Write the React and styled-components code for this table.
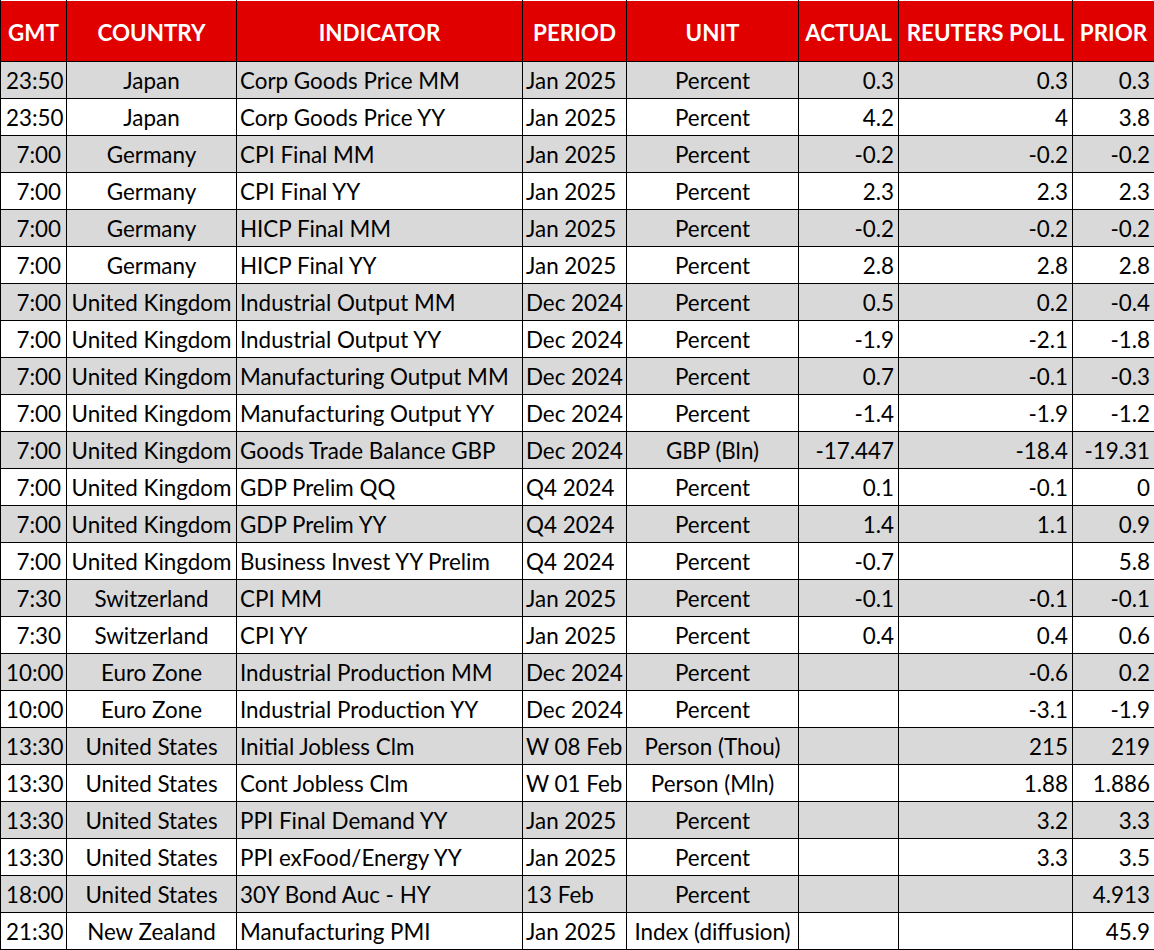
import React from 'react';
import styled, { createGlobalStyle } from 'styled-components';

const GlobalStyle = createGlobalStyle`
  html, body {
    margin: 0;
    padding: 0;
    background: #ffffff;
  }
`;

const columns = [
  { key: 'gmt', label: 'GMT', width: 66, align: 'right' },
  { key: 'country', label: 'COUNTRY', width: 170, align: 'center' },
  { key: 'indicator', label: 'INDICATOR', width: 286, align: 'left' },
  { key: 'period', label: 'PERIOD', width: 104, align: 'left' },
  { key: 'unit', label: 'UNIT', width: 172, align: 'center' },
  { key: 'actual', label: 'ACTUAL', width: 100, align: 'right' },
  { key: 'poll', label: 'REUTERS POLL', width: 174, align: 'right' },
  { key: 'prior', label: 'PRIOR', width: 82, align: 'right' },
];

const rows = [
  ['23:50', 'Japan', 'Corp Goods Price MM', 'Jan 2025', 'Percent', '0.3', '0.3', '0.3'],
  ['23:50', 'Japan', 'Corp Goods Price YY', 'Jan 2025', 'Percent', '4.2', '4', '3.8'],
  ['7:00', 'Germany', 'CPI Final MM', 'Jan 2025', 'Percent', '-0.2', '-0.2', '-0.2'],
  ['7:00', 'Germany', 'CPI Final YY', 'Jan 2025', 'Percent', '2.3', '2.3', '2.3'],
  ['7:00', 'Germany', 'HICP Final MM', 'Jan 2025', 'Percent', '-0.2', '-0.2', '-0.2'],
  ['7:00', 'Germany', 'HICP Final YY', 'Jan 2025', 'Percent', '2.8', '2.8', '2.8'],
  ['7:00', 'United Kingdom', 'Industrial Output MM', 'Dec 2024', 'Percent', '0.5', '0.2', '-0.4'],
  ['7:00', 'United Kingdom', 'Industrial Output YY', 'Dec 2024', 'Percent', '-1.9', '-2.1', '-1.8'],
  ['7:00', 'United Kingdom', 'Manufacturing Output MM', 'Dec 2024', 'Percent', '0.7', '-0.1', '-0.3'],
  ['7:00', 'United Kingdom', 'Manufacturing Output YY', 'Dec 2024', 'Percent', '-1.4', '-1.9', '-1.2'],
  ['7:00', 'United Kingdom', 'Goods Trade Balance GBP', 'Dec 2024', 'GBP (Bln)', '-17.447', '-18.4', '-19.31'],
  ['7:00', 'United Kingdom', 'GDP Prelim QQ', 'Q4 2024', 'Percent', '0.1', '-0.1', '0'],
  ['7:00', 'United Kingdom', 'GDP Prelim YY', 'Q4 2024', 'Percent', '1.4', '1.1', '0.9'],
  ['7:00', 'United Kingdom', 'Business Invest YY Prelim', 'Q4 2024', 'Percent', '-0.7', '', '5.8'],
  ['7:30', 'Switzerland', 'CPI MM', 'Jan 2025', 'Percent', '-0.1', '-0.1', '-0.1'],
  ['7:30', 'Switzerland', 'CPI YY', 'Jan 2025', 'Percent', '0.4', '0.4', '0.6'],
  ['10:00', 'Euro Zone', 'Industrial Production MM', 'Dec 2024', 'Percent', '', '-0.6', '0.2'],
  ['10:00', 'Euro Zone', 'Industrial Production YY', 'Dec 2024', 'Percent', '', '-3.1', '-1.9'],
  ['13:30', 'United States', 'Initial Jobless Clm', 'W 08 Feb', 'Person (Thou)', '', '215', '219'],
  ['13:30', 'United States', 'Cont Jobless Clm', 'W 01 Feb', 'Person (Mln)', '', '1.88', '1.886'],
  ['13:30', 'United States', 'PPI Final Demand YY', 'Jan 2025', 'Percent', '', '3.2', '3.3'],
  ['13:30', 'United States', 'PPI exFood/Energy YY', 'Jan 2025', 'Percent', '', '3.3', '3.5'],
  ['18:00', 'United States', '30Y Bond Auc - HY', '13 Feb', 'Percent', '', '', '4.913'],
  ['21:30', 'New Zealand', 'Manufacturing PMI', 'Jan 2025', 'Index (diffusion)', '', '', '45.9'],
];

const Sheet = styled.table`
  width: 1154px;
  table-layout: fixed;
  border-collapse: collapse;
  font-family: Lato, 'Liberation Sans', sans-serif;
  font-size: 22.4px;
  color: #000000;
  border-top: 1px solid #ffffff;
`;

const HeadCell = styled.th`
  height: 55px;
  padding: 5px 0 0;
  background: #e00000;
  color: #ffffff;
  font-weight: 700;
  text-align: center;
  white-space: nowrap;
  overflow: hidden;
  border: 1px solid #000000;
  border-top: none;
  line-height: 1;
`;

const Row = styled.tr`
  background: ${(p) => (p.$shaded ? '#d9d9d9' : '#ffffff')};
`;

const Cell = styled.td`
  height: 34px;
  padding: 2px ${(p) => (p.$first ? '5px' : p.$align === 'right' ? '4px' : '3px')} 0;
  text-align: ${(p) => p.$align};
  white-space: nowrap;
  overflow: hidden;
  border: 1px solid #000000;
  line-height: 1;
`;

export default function App() {
  return (
    <>
      <GlobalStyle />
      <Sheet>
        <colgroup>
          {columns.map((c) => (
            <col key={c.key} style={{ width: c.width }} />
          ))}
        </colgroup>
        <thead>
          <tr>
            {columns.map((c) => (
              <HeadCell key={c.key}>{c.label}</HeadCell>
            ))}
          </tr>
        </thead>
        <tbody>
          {rows.map((r, i) => (
            <Row key={i} $shaded={i % 2 === 0}>
              {r.map((v, j) => (
                <Cell key={j} $align={columns[j].align} $first={j === 0}>
                  {v}
                </Cell>
              ))}
            </Row>
          ))}
        </tbody>
      </Sheet>
    </>
  );
}
